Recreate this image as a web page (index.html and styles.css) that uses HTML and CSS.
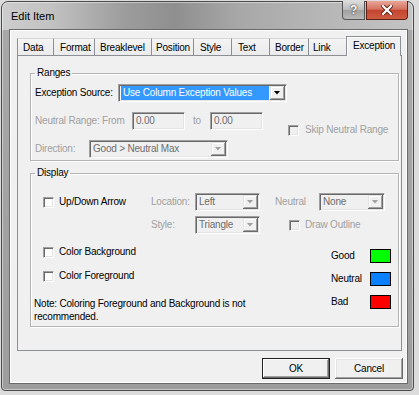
FILE: index.html
```html
<!DOCTYPE html>
<html lang="en">

<head>
    <meta charset="UTF-8">
    <title>Edit Item</title>
    <link rel="stylesheet" href="styles.css">
</head>

<body>
    <div class="window">
        <!-- Title bar -->
        <div class="titlebar">
            <span class="title">Edit Item</span>
            <div class="caption-buttons">
                <span class="cap-btn help">?</span>
                <span class="cap-btn close">
                    <svg width="12" height="10" viewBox="0 0 12 10">
                        <path d="M2 1 L10 9 M10 1 L2 9" stroke="#5a1d14" stroke-width="4" stroke-linecap="square" />
                        <path d="M2 1 L10 9 M10 1 L2 9" stroke="#fff" stroke-width="2.2" stroke-linecap="square" />
                    </svg>
                </span>
            </div>
        </div>

        <div class="client">
            <!-- Tabs -->
            <div class="tabs">
                <span class="tab">Data</span>
                <span class="tab">Format</span>
                <span class="tab">Breaklevel</span>
                <span class="tab">Position</span>
                <span class="tab">Style</span>
                <span class="tab">Text</span>
                <span class="tab">Border</span>
                <span class="tab">Link</span>
                <span class="tab active">Exception</span>
            </div>

            <div class="panel">
                <fieldset class="group ranges">
                    <legend>Ranges</legend>

                    <div class="row">
                        <span class="label source-label">Exception Source:</span>
                        <div class="combo source-combo">
                            <span class="value selected">Use Column Exception Values</span>
                            <span class="arrow"></span>
                        </div>
                    </div>

                    <div class="row">
                        <span class="label dim from-label">Neutral Range: From</span>
                        <span class="field">0.00</span>
                        <span class="label dim to-label">to</span>
                        <span class="field">0.00</span>
                        <label class="check disabled skip-check"><span class="box"></span>Skip Neutral Range</label>
                    </div>

                    <div class="row">
                        <span class="label dim direction-label">Direction:</span>
                        <div class="combo disabled direction-combo">
                            <span class="value">Good &gt; Neutral Max</span>
                            <span class="arrow"></span>
                        </div>
                    </div>
                </fieldset>

                <fieldset class="group display">
                    <legend>Display</legend>

                    <div class="row row-arrow">
                        <label class="check arrow-check"><span class="box"></span>Up/Down Arrow</label>
                        <span class="label dim small-label">Location:</span>
                        <div class="combo disabled small-combo">
                            <span class="value">Left</span>
                            <span class="arrow"></span>
                        </div>
                        <span class="label dim neutral-label">Neutral</span>
                        <div class="combo disabled none-combo">
                            <span class="value">None</span>
                            <span class="arrow"></span>
                        </div>
                    </div>

                    <div class="row row-style">
                        <span class="label dim small-label style-label">Style:</span>
                        <div class="combo disabled small-combo">
                            <span class="value">Triangle</span>
                            <span class="arrow"></span>
                        </div>
                        <label class="check disabled outline-check"><span class="box"></span>Draw Outline</label>
                    </div>

                    <div class="colors">
                        <div class="color-options">
                            <label class="check"><span class="box"></span>Color Background</label>
                            <label class="check"><span class="box"></span>Color Foreground</label>
                            <p class="note">Note: Coloring Foreground and Background is not recommended.</p>
                        </div>
                        <div class="legend-list">
                            <div class="legend-item"><span class="legend-name">Good</span><span class="swatch good"></span></div>
                            <div class="legend-item"><span class="legend-name">Neutral</span><span class="swatch neutral"></span></div>
                            <div class="legend-item"><span class="legend-name">Bad</span><span class="swatch bad"></span></div>
                        </div>
                    </div>
                </fieldset>
            </div>

            <!-- Dialog buttons -->
            <div class="buttons">
                <button class="default">OK</button>
                <button>Cancel</button>
            </div>
        </div>
    </div>
</body>

</html>
```

FILE: styles.css
```css
* {
    box-sizing: border-box;
}

body {
    margin: 0;
    background: #dcdcdc;
    font-family: 'Liberation Sans', Arial, sans-serif;
    font-size: 10px;
    line-height: 12px;
    letter-spacing: -0.2px;
    color: #000;
}

/* Window frame */
.window {
    width: 413px;
    height: 390px;
    margin: 1px 0 0 1px;
    padding: 0 5px 6px 7px;
    border: 1px solid #4a4a4a;
    border-radius: 7px 7px 4px 4px;
    background:
        linear-gradient(to right, #cdcdcd 0%, #c2c2c2 12%, #9c9c9c 30%, #8f8f8f 42%, #a8a8a8 58%, #b4b4b4 75%, #c4c4c4 100%) top / 100% 28px no-repeat,
        linear-gradient(#a9a9a9, #9d9d9d);
    box-shadow: inset 0 0 0 1px rgba(255, 255, 255, 0.45);
}

.titlebar {
    display: flex;
    justify-content: space-between;
    align-items: flex-start;
    height: 27px;
}

.title {
    padding: 8px 0 0 2px;
    font-size: 11px;
    line-height: 13px;
    letter-spacing: 0;
    color: #000;
}

.caption-buttons {
    display: flex;
    gap: 1px;
    margin-top: -1px;
}

.cap-btn {
    display: flex;
    align-items: center;
    justify-content: center;
    height: 19px;
    border: 1px solid #555;
    border-top: none;
}

.help {
    width: 23px;
    border-radius: 0 0 0 4px;
    background: linear-gradient(#dcdcdc, #bcbcbc 48%, #a2a2a2 52%, #b9b9b9);
    color: #fff;
    font-weight: bold;
    font-size: 12px;
    text-shadow: 0 0 2px #333, 0 0 1px #333;
}

.close {
    width: 42px;
    border-color: #5e2219;
    border-radius: 0 0 4px 0;
    background: linear-gradient(#e8a698, #d57462 45%, #c2452f 52%, #cf5b42);
}

/* Client area */
.client {
    width: 399px;
    height: 355px;
    padding: 6px 5px 0 7px;
    border: 1px solid #6a6a6a;
    background: #f0f0f0;
    box-shadow: inset 0 0 0 1px #fff;
}

.tabs {
    display: flex;
    align-items: flex-end;
    height: 19px;
}

.tab {
    position: relative;
    height: 17px;
    padding: 3px 0 0 5px;
    border-left: 1px solid #8c8f96;
    border-top: 1px solid #d8d8d8;
    background: linear-gradient(#f4f4f4, #ebebeb);
    white-space: nowrap;
}

.tab:nth-child(1) { width: 36px; }
.tab:nth-child(2) { width: 41px; padding-left: 6px; }
.tab:nth-child(3) { width: 57px; }
.tab:nth-child(4) { width: 42px; padding-left: 4px; }
.tab:nth-child(5) { width: 38px; padding-left: 6px; }
.tab:nth-child(6) { width: 38px; padding-left: 6px; }
.tab:nth-child(7) { width: 39px; padding-left: 5px; }
.tab:nth-child(8) { width: 38px; padding-left: 4px; }

.tab.active {
    z-index: 1;
    width: 55px;
    height: 20px;
    margin-bottom: -1px;
    padding: 3px 0 0 6px;
    border: 1px solid #8c8f96;
    border-bottom: none;
    background: #f0f0f0;
    box-shadow: inset 1px 1px 0 #fff;
}

.panel {
    height: 296px;
    padding: 11px 0 0 12px;
    border: 1px solid #8c8f96;
    background: #f0f0f0;
}

/* Group boxes */
.group {
    width: 369px;
    margin: 0;
    padding: 0 4px 2px 4px;
    border: 1px solid #b4b4b4;
    box-shadow: inset 1px 1px 0 #fff, 1px 1px 0 #fff;
    min-inline-size: 0;
}

.group legend {
    padding: 0 2px;
    line-height: 12px;
}

.group.display {
    margin-top: 6px;
    padding-bottom: 3px;
}

.row {
    display: flex;
    align-items: center;
    height: 18px;
    margin-top: 10px;
}

.ranges .row:first-of-type {
    margin-top: 5px;
}

.label {
    flex: none;
    white-space: nowrap;
}

.dim {
    color: #a0a0a0;
}

.source-label { width: 83px; }
.from-label { width: 97px; }
.to-label { width: 17px; margin-left: 8px; }
.direction-label { width: 54px; }
.small-label { width: 44px; }
.neutral-label { width: 44px; margin-left: 15px; }
.style-label { margin-left: 116px; }

/* Sunken controls */
.combo,
.field {
    display: flex;
    flex: none;
    height: 18px;
    padding: 1px;
    border: 1px solid;
    border-color: #a0a0a0 #fff #fff #a0a0a0;
    box-shadow: inset 1px 1px 0 #696969, inset -1px -1px 0 #e3e3e3;
    background: #fff;
    white-space: nowrap;
}

.combo .value {
    flex: 1;
    padding-left: 2px;
    line-height: 14px;
    overflow: hidden;
}

.combo .value.selected {
    margin: 0 1px 0 1px;
    padding-left: 2px;
    background: #3399ff;
    color: #fff;
}

.combo .arrow {
    display: flex;
    align-items: center;
    justify-content: center;
    width: 15px;
    background: #f0f0f0;
    box-shadow: inset -1px -1px 0 #696969, inset 1px 1px 0 #e3e3e3, inset -2px -2px 0 #a0a0a0, inset 2px 2px 0 #fff;
    color: #000;
}

.combo .arrow::after {
    content: "";
    width: 7px;
    height: 4px;
    margin: 0 1px 1px 0;
    background: currentColor;
    clip-path: polygon(0 0, 100% 0, 50% 100%);
}

.combo.disabled {
    background: #f0f0f0;
    color: #6d6d6d;
}

.combo.disabled .arrow {
    color: #a0a0a0;
}

.field {
    width: 53px;
    padding-left: 3px;
    line-height: 14px;
    background: #f0f0f0;
    color: #6d6d6d;
}

.source-combo { width: 169px; }
.direction-combo { width: 139px; }
.small-combo { width: 65px; }
.none-combo { width: 66px; }

/* Checkboxes */
.check {
    display: flex;
    align-items: center;
    flex: none;
    height: 12px;
    white-space: nowrap;
}

.check .box {
    width: 11px;
    height: 11px;
    margin-right: 5px;
    border: 1px solid;
    border-color: #a0a0a0 #fff #fff #a0a0a0;
    box-shadow: inset 1px 1px 0 #696969, inset -1px -1px 0 #e3e3e3;
    background: #fff;
}

.check.disabled {
    color: #a0a0a0;
}

.check.disabled .box {
    background: #f0f0f0;
}

.skip-check {
    align-self: flex-start;
    margin: 12px 0 -6px 25px;
}

.skip-check .box {
    margin-right: 6px;
}

.row-arrow {
    margin-top: 14px;
}

.arrow-check {
    width: 108px;
    margin-left: 8px;
}

.row-style {
    margin-top: 5px;
}

.outline-check {
    margin-left: 29px;
}

/* Colour options */
.colors {
    display: flex;
    align-items: flex-start;
}

.color-options {
    display: flex;
    flex-direction: column;
    width: 296px;
    margin-top: 12px;
}

.color-options .check {
    margin-left: 8px;
}

.color-options .check + .check {
    margin-top: 12px;
}

.note {
    width: 225px;
    margin: 15px 0 0 -1px;
    line-height: 13px;
}

.legend-list {
    display: flex;
    flex-direction: column;
    gap: 9px;
    margin-top: 15px;
}

.legend-item {
    display: flex;
    align-items: center;
}

.legend-name {
    width: 39px;
}

.swatch {
    width: 21px;
    height: 14px;
    border: 1px solid #000;
}

.swatch.good { background: #00ff00; }
.swatch.neutral { background: #0a80ff; }
.swatch.bad { background: #ff0000; }

/* Dialog buttons */
.buttons {
    display: flex;
    justify-content: flex-end;
    gap: 5px;
    margin: 7px -1px 0 0;
}

button {
    width: 68px;
    height: 21px;
    padding: 0;
    border: none;
    background: #f0f0f0;
    box-shadow: inset -1px -1px 0 #696969, inset 1px 1px 0 #fff, inset -2px -2px 0 #a0a0a0, inset 2px 2px 0 #e3e3e3;
    font-family: 'Liberation Sans', Arial, sans-serif;
    font-size: 10px;
    letter-spacing: -0.2px;
    color: #000;
}

button.default {
    border: 1px solid #222;
    box-shadow: inset -1px -1px 0 #696969, inset 1px 1px 0 #fff, inset -2px -2px 0 #a0a0a0;
}
```
